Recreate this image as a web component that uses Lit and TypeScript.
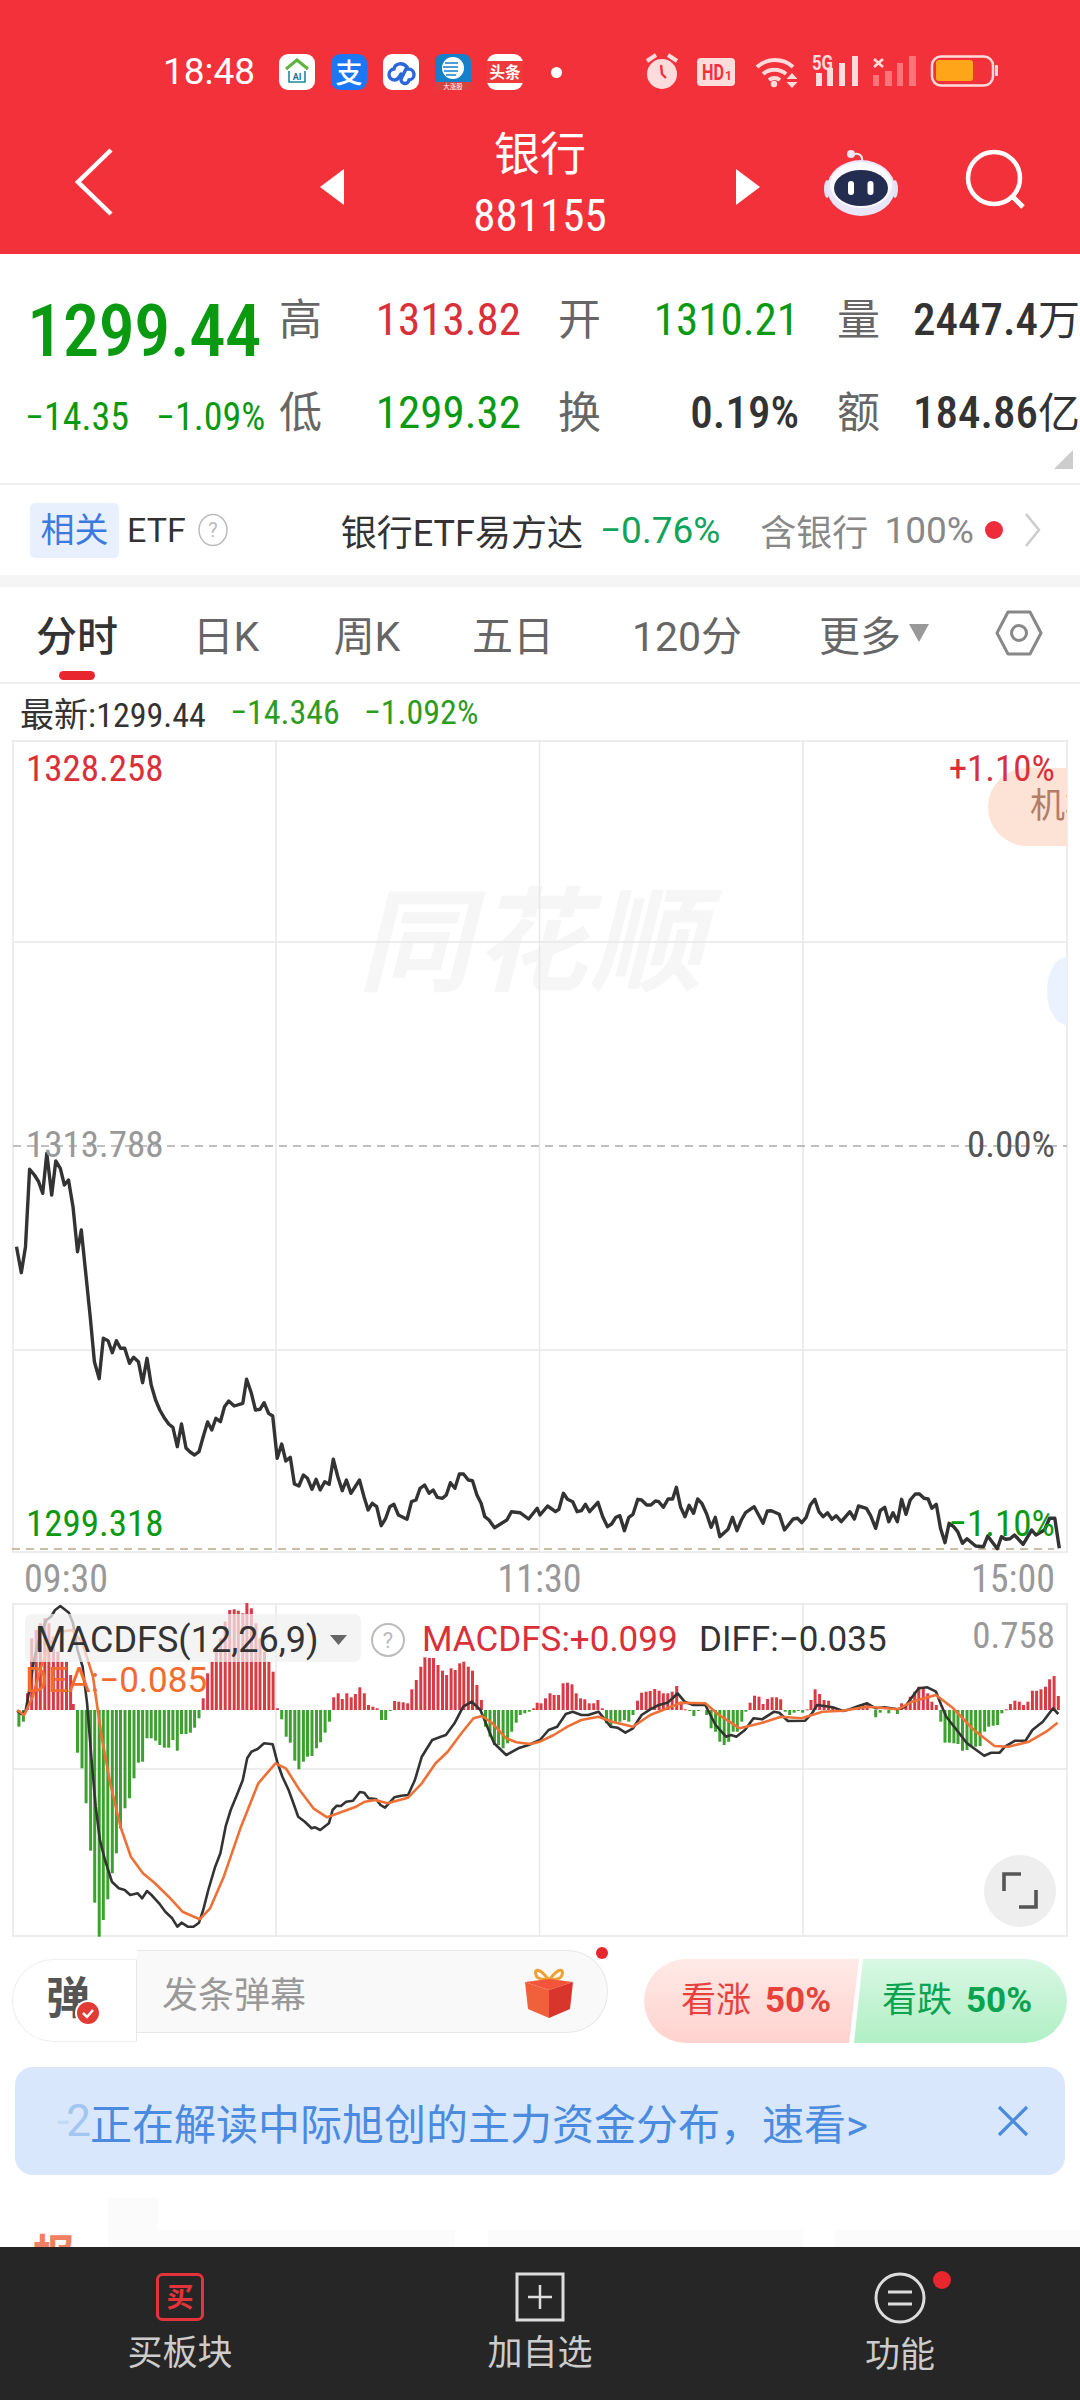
import { LitElement, html, css, svg } from "lit";
import { customElement } from "lit/decorators.js";

type P = [number, number];
const mainA: P[] = [[48,440],[62,518],[74,440],[86,208],[100,225],[112,245],[124,280],[136,160],[150,285],[162,183],[175,205],[187,255],[199,240],[212,320],[225,455],[236,390],[250,530],[262,650],[274,785],[288,836],[300,715],[314,722],[326,758],[338,722],[350,745],[362,745],[376,790],[388,772],[402,785],[414,848],[427,775],[439,855],[452,900],[464,930],[478,955],[490,972],[502,982],[515,1040],[527,972],[540,1044],[552,1056],[565,1065],[578,1055],[590,1010],[603,966],[615,990],[627,955],[640,965],[652,920],[664,903],[680,918],[705,910],[716,838],[730,880],[742,930],[755,928],[767,908],[780,940],[792,948],[805,1075],[818,1032],[830,1083],[843,1072],[855,1152],[868,1158],[881,1125],[893,1135],[906,1168],[918,1138],[930,1170],[943,1145],[956,1153],[968,1078],[981,1130],[994,1172],[1006,1140],[1019,1180],[1044,1140],[1057,1190],[1069,1230],[1081,1210],[1094,1220],[1107,1277],[1120,1255],[1132,1220],[1144,1213],[1157,1245],[1182,1258],[1195,1205],[1208,1200],[1220,1165],[1233,1155],[1246,1180],[1258,1170],[1270,1192],[1285,1195],[1296,1185],[1308,1148],[1321,1165],[1334,1122],[1346,1122],[1360,1140],[1372,1142],[1385,1185],[1397,1210],[1408,1250],[1420,1260],[1436,1283],[1472,1260],[1485,1235],[1510,1238],[1535,1257],[1560,1225]];
const mainB: P[] = [[0,1245],[22,1218],[45,1235],[55,1228],[68,1180],[80,1198],[95,1205],[108,1235],[120,1232],[132,1213],[144,1235],[168,1207],[182,1250],[196,1280],[208,1272],[220,1252],[232,1247],[245,1292],[258,1252],[270,1243],[284,1198],[295,1200],[310,1215],[322,1215],[335,1203],[345,1205],[358,1222],[372,1197],[385,1197],[396,1162],[408,1220],[421,1250],[433,1216],[446,1240],[458,1197],[470,1210],[484,1242],[497,1282],[509,1252],[522,1310],[546,1288],[559,1252],[572,1292],[585,1260],[597,1238],[622,1220],[648,1270],[660,1233],[672,1232],[695,1243],[710,1290],[735,1257],[748,1255],[760,1268],[773,1252],[785,1215],[798,1198],[810,1235],[822,1250],[835,1238],[848,1258],[860,1247],[875,1265],[900,1235],[913,1257],[925,1218],[948,1225],[960,1247],[975,1285],[988,1232],[1001,1222],[1013,1265],[1025,1238],[1038,1265],[1050,1198],[1063,1243],[1075,1200],[1090,1182],[1102,1182],[1115,1195],[1127,1197],[1138,1225],[1151,1213],[1163,1285],[1176,1328],[1188,1270],[1201,1280],[1213,1295],[1227,1330],[1240,1316],[1265,1338],[1288,1340],[1300,1308],[1328,1346],[1340,1310],[1352,1318],[1365,1316],[1378,1305],[1403,1333],[1428,1290],[1440,1305],[1465,1290],[1480,1255],[1495,1255],[1508,1345]];
const diffA: P[] = [[50,392],[62,402],[74,395],[85,330],[97,250],[110,190],[122,150],[135,120],[148,110],[160,90],[175,78],[200,98],[212,130],[225,210],[240,260],[253,370],[265,530],[278,680],[290,780],[305,840],[325,905],[345,925],[362,930],[378,945],[400,940],[413,955],[427,933],[440,945],[462,970],[480,995],[500,1015],[515,1040],[527,1028],[545,1040],[562,1040],[578,1028],[590,990],[605,930],[625,860],[640,820],[655,740],[670,690],[690,640],[705,600],[718,535],[730,515],[748,507],[767,490],[792,493],[805,545],[820,590],[838,630],[852,670],[866,710],[885,725],[905,745],[915,742],[930,750],[955,730],[966,690],[978,677],[990,678],[1005,665],[1025,662],[1045,636],[1058,638],[1070,655],[1092,657],[1105,675],[1118,683],[1145,652],[1165,647],[1185,645],[1205,600],[1225,530],[1255,480],[1280,470],[1295,465],[1320,430],[1345,380],[1370,365],[1395,390],[1415,440],[1435,490],[1470,525],[1505,505],[1535,495],[1568,480]];
const diffB: P[] = [[0,480],[25,450],[50,440],[75,402],[95,395],[120,405],[140,405],[170,395],[190,420],[205,440],[225,443],[248,458],[270,445],[295,405],[320,388],[345,375],[370,368],[385,355],[400,340],[420,365],[445,375],[480,375],[510,435],[540,470],[555,465],[570,470],[595,450],[620,415],[645,418],[680,395],[695,398],[720,423],[770,422],[790,400],[805,375],[850,382],[880,393],[900,388],[925,378],[950,370],[975,385],[1000,382],[1020,385],[1040,388],[1060,380],[1085,345],[1100,325],[1125,322],[1150,335],[1165,375],[1180,410],[1210,450],[1240,490],[1290,527],[1310,518],[1335,518],[1350,500],[1380,482],[1410,482],[1430,450],[1460,425],[1490,385],[1505,402]];
const deaA: P[] = [[50,390],[70,405],[95,350],[120,260],[145,190],[175,155],[210,150],[240,190],[270,290],[295,470],[320,610],[350,740],[380,830],[415,880],[450,910],[490,950],[530,995],[580,1018],[610,985],[650,890],[700,740],[750,610],[800,550],[830,565],[870,630],[910,685],[950,712],[990,697],[1030,682],[1060,665],[1090,660],[1125,670],[1185,653],[1225,610],[1265,550],[1300,515],[1340,460],[1375,415],[1400,408],[1430,430],[1470,475],[1500,487],[1540,492],[1568,485]];
const deaB: P[] = [[0,485],[40,465],[80,440],[120,420],[170,410],[210,425],[270,440],[320,405],[370,385],[410,368],[480,370],[520,405],[580,445],[640,430],[700,410],[760,415],[820,395],[880,392],[950,380],[1040,388],[1080,365],[1150,345],[1200,385],[1260,450],[1320,498],[1360,500],[1420,485],[1470,455],[1503,428]];
const barsA: P[] = [[55,440],[68,425],[80,340],[92,175],[105,150],[117,130],[130,115],[142,130],[155,170],[168,215],[180,245],[193,245],[205,285],[213,372],[225,518],[238,565],[250,670],[263,812],[275,968],[288,1070],[300,1020],[313,958],[326,880],[338,820],[350,745],[363,685],[376,655],[389,595],[402,548],[414,545],[427,475],[439,475],[452,482],[464,495],[477,503],[490,503],[502,480],[515,512],[527,462],[540,462],[553,458],[565,443],[578,415],[590,355],[603,280],[616,245],[628,205],[641,175],[654,125],[667,90],[680,88],[692,92],[705,100],[717,66],[730,85],[743,130],[755,175],[768,215],[781,245],[793,275],[806,385],[818,418],[831,470],[843,488],[856,542],[868,568],[881,545],[893,530],[906,528],[919,505],[931,487],[944,458],[957,425],[969,352],[982,340],[994,357],[1007,340],[1020,352],[1032,342],[1045,322],[1058,340],[1070,375],[1083,380],[1095,385],[1108,420],[1120,420],[1133,392],[1146,363],[1158,365],[1171,367],[1184,370],[1196,328],[1209,300],[1222,260],[1234,232],[1247,234],[1259,234],[1272,255],[1285,272],[1297,285],[1310,265],[1322,270],[1335,250],[1347,245],[1360,260],[1372,272],[1385,315],[1398,360],[1410,440],[1423,470],[1436,495],[1448,495],[1461,505],[1474,490],[1486,455],[1499,428],[1511,405],[1524,400],[1537,395],[1550,385],[1560,368]];
const barsB: P[] = [[3,370],[16,355],[29,340],[41,345],[54,345],[67,310],[80,308],[93,313],[105,340],[118,355],[130,358],[143,370],[156,370],[168,360],[181,385],[193,430],[206,440],[219,430],[232,425],[245,420],[258,425],[270,405],[283,362],[295,338],[308,335],[320,333],[333,327],[346,332],[358,340],[371,340],[384,335],[397,318],[410,365],[422,388],[435,392],[447,408],[460,393],[484,405],[497,445],[510,455],[522,485],[535,495],[548,485],[561,455],[573,455],[586,425],[598,395],[610,368],[623,347],[636,350],[648,372],[661,357],[674,352],[687,352],[699,358],[712,395],[725,405],[738,398],[750,392],[763,398],[776,388],[787,360],[799,328],[812,342],[825,360],[838,362],[850,382],[925,375],[938,372],[950,368],[975,412],[988,398],[1013,400],[1038,402],[1050,370],[1063,375],[1075,350],[1088,335],[1100,320],[1113,325],[1126,340],[1138,365],[1151,375],[1164,425],[1176,488],[1189,488],[1202,490],[1214,492],[1227,512],[1240,510],[1252,500],[1265,500],[1278,498],[1291,455],[1303,440],[1316,437],[1329,435],[1341,400],[1354,388],[1366,372],[1379,362],[1392,365],[1404,375],[1417,365],[1430,332],[1442,332],[1455,328],[1468,320],[1480,298],[1493,288],[1505,348]];

const S = 2.904;
const pts = (a: P[], b: P[], top: number) =>
  [...a.map(([x, y]) => `${(x / S).toFixed(1)},${(top + y / 3).toFixed(1)}`),
   ...b.map(([x, y]) => `${(540 + x / S).toFixed(1)},${(top + y / 3).toFixed(1)}`)].join(" ");
const bars = [...barsA.map(([x, y]) => [x / S, y] as P), ...barsB.map(([x, y]) => [540 + x / S, y] as P)];

@customElement("app-root")
export class AppRoot extends LitElement {
  static styles = css`
    :host { display: block; width: 1080px; height: 2400px; overflow: hidden; background: #fff; position: relative;
      font-family: Roboto, "Noto Sans CJK SC", sans-serif; color: #333; }
    .n { font-stretch: 87%; }
    .header { height: 254px; background: #f3313a; color: #fff; display: flex; flex-direction: column; }
    .status { height: 110px; display: flex; align-items: center; padding: 34px 0 0 163px; box-sizing: border-box; }
    .time { width: 116px; font-size: 37px; line-height: 40px; }
    .apps { display: flex; gap: 16px; }
    .apps svg { width: 36px; height: 36px; display: block; }
    .sdot { width: 11px; height: 11px; border-radius: 50%; background: #fff; margin-left: 28px; }
    .sys { margin: 6px 0 0 68px; display: block; width: 380px; height: 60px; }
    .nav { flex: 1; display: grid; grid-template-columns: 320px 25px 390px 25px 320px; align-items: center; }
    .nav svg { display: block; }
    .back { margin-left: 75px; }
    .tri { margin-top: 10px; }
    .title { text-align: center; padding-top: 2px; }
    .title .t { font-size: 46px; line-height: 58px; }
    .title .c { font-size: 45px; line-height: 50px; margin-top: 8px; }
    .navr { display: flex; align-items: center; padding-left: 63px; gap: 66px; }

    .quote { height: 231px; box-sizing: border-box; padding-top: 34px; border-bottom: 2px solid #eee; position: relative;
      display: grid; grid-template-columns: 279px 43px 199px 80px 198px 81px 200px; grid-template-rows: 60px 60px; row-gap: 33px; }
    .lab { font-size: 43px; line-height: 60px; color: #666; justify-self: end; width: 43px; padding-top: 2px; }
    .val { font-size: 45px; line-height: 60px; text-align: right; white-space: nowrap; padding-top: 2px; }
    .val.d { font-weight: 500; color: #333; }
    .cj { font-size: 42px; font-weight: 400; }
    .red { color: #d9303a; } .grn { color: #0a9a12; }
    .big { font-size: 73px; line-height: 60px; font-weight: 500; color: #0a9a12; padding-left: 27px; margin-top: 13px; white-space: nowrap; letter-spacing: -0.8px; }
    .chg { font-size: 38px; line-height: 60px; color: #0a9a12; padding-left: 25px; margin-top: 6px; white-space: nowrap; display: flex; gap: 27px; }
    .corner { position: absolute; right: 7px; bottom: 14px; width: 19px; height: 19px; background: #ccc; clip-path: polygon(100% 0, 100% 100%, 0 100%); }

    .etf { height: 90px; display: flex; align-items: center; font-size: 36px; padding-left: 30px; white-space: nowrap; }
    .pill { width: 89px; height: 55px; background: #e8f0fd; color: #3b7be0; border-radius: 5px; text-align: center; line-height: 55px; margin-right: 8px; font-size: 34px; }
    .elab { font-size: 34px; }
    .help { margin-left: 12px; }
    .etfn { margin-left: 113px; color: #333; }
    .etfp { margin-left: 17px; color: #10a35a; font-size: 37px; }
    .etfh { margin-left: 40px; color: #888; }
    .etfv { margin-left: 16px; color: #888; font-size: 37px; }
    .rdot { width: 18px; height: 18px; border-radius: 50%; background: #ee2c3c; margin-left: 11px; }
    .chev { margin-left: 21px; }
    .band { height: 12px; background: #f5f5f5; }
    .tabs { height: 97px; box-sizing: border-box; border-bottom: 2px solid #eee; display: grid; grid-template-columns: 154px 144px 138px 154px 194px 180px 110px; align-items: center; justify-items: center; font-size: 41px; color: #666; padding-bottom: 3px; position: relative; }
    .tabs .on { color: #333; font-weight: 500; position: relative; }
    .tabs .on::after { content: ""; position: absolute; left: 23px; bottom: -17px; width: 36px; height: 9px; border-radius: 5px; background: #e8262e; }
    .more { display: flex; align-items: center; gap: 8px; }
    .latest { height: 56px; display: flex; align-items: center; padding-left: 20px; font-size: 34px; white-space: nowrap; }
    .latest .g { color: #2d9c1e; margin-left: 24px; }

    .chart { position: relative; height: 813px; }
    .macd { position: relative; height: 334px; }
    .chart svg, .macd svg { position: absolute; left: 0; top: 0; width: 1080px; height: 100%; display: block; }
    .lb { position: absolute; font-size: 37px; line-height: 36px; white-space: nowrap; }
    .lm { font-size: 35px; }
    .lh { font-size: 36px; }
    .wm { position: absolute; left: 358px; top: 146px; font-size: 113px; line-height: 116px; font-weight: 700; font-style: italic; color: #f6f6f6; letter-spacing: 3px; }
    .pj { position: absolute; right: 13px; top: 28px; width: 79px; height: 78px; border-radius: 39px 0 0 39px; background: #fde3d5; color: #b47d68; font-size: 35px; line-height: 78px; overflow: hidden; padding-left: 42px; box-sizing: border-box; white-space: nowrap; }
    .pc { position: absolute; right: 13px; top: 217px; width: 20px; height: 68px; border-radius: 20px 0 0 20px / 34px 0 0 34px; background: #eaf2fd; }
    .axis { height: 50px; display: flex; justify-content: space-between; align-items: center; padding: 2px 25px 0 24px; box-sizing: border-box; font-size: 38px; color: #999; }
    .mp { position: absolute; left: 25px; top: 11px; width: 336px; height: 48px; border-radius: 7px; background: rgba(240,240,240,.72); }
    .mt { position: absolute; left: 330px; top: 32px; width: 17px; height: 10px; background: #666; clip-path: polygon(0 0, 100% 0, 50% 100%); }
    .fs { position: absolute; left: 984px; top: 252px; width: 72px; height: 72px; border-radius: 50%; background: #eee; }

    .act { height: 106px; display: flex; padding: 13px 12px 0; box-sizing: border-box; }
    .dm { width: 125px; height: 83px; margin-top: 9px; box-sizing: border-box; border: 1.5px solid #eee; border-right: 1.5px solid #e8e8e8; border-radius: 42px 0 0 42px; position: relative; font-size: 44px; font-weight: 700; color: #555; line-height: 78px; padding-left: 33px; }
    .chk { position: absolute; left: 62px; top: 40px; }
    .ip { width: 471px; height: 83px; box-sizing: border-box; background: #f9f9f9; border: 1.5px solid #e8e8e8; border-left: 0; border-radius: 0 41px 41px 0; display: flex; align-items: center; padding-left: 25px; font-size: 36px; color: #999; position: relative; }
    .gift { position: absolute; left: 387px; top: 14px; }
    .tip { position: absolute; left: 459px; top: -4px; width: 12px; height: 12px; border-radius: 50%; background: #e8262e; }
    .vote { margin-left: 36px; margin-top: 9px; display: flex; width: 423px; height: 84px; border-radius: 42px; overflow: hidden; font-size: 35px; white-space: nowrap; }
    .up { width: 215px; background: linear-gradient(#ffeae7, #ffd2ce); color: #e8413c; padding-left: 37px; box-sizing: border-box; clip-path: polygon(0 0, 100% 0, 205px 100%, 0 100%); line-height: 84px; }
    .dn { width: 213px; margin-left: -5px; background: linear-gradient(#d9f8e4, #b0efc4); color: #0aa34f; padding-left: 28px; box-sizing: border-box; clip-path: polygon(9px 0, 100% 0, 100% 100%, 0 100%); line-height: 84px; }
    .vote b { font-size: 35px; margin-left: 14px; font-weight: 700; }
    .ban { margin: 24px 15px 0; height: 108px; background: #d8e7fb; border-radius: 18px; display: flex; align-items: center; padding-left: 42px; color: #4a8be0; font-size: 42px; white-space: nowrap; position: relative; }
    .ban .s { color: #a3c5f2; font-size: 44px; letter-spacing: -3px; margin-right: 2px; }
    .ban .s i { color: #c4d9f5; font-style: normal; }
    .ban svg { position: absolute; left: 982px; top: 38px; }
    .rest { height: 72px; position: relative; overflow: hidden; }
    .rest .h { position: absolute; left: 33px; top: 60px; font-size: 42px; line-height: 42px; font-weight: 700; color: #f0805f; }
    .sk { position: absolute; background: #fbfbfb; }
    .bar { height: 153px; background: #262626; display: grid; grid-template-columns: repeat(3, 360px); color: #ccc; font-size: 35px; position: relative; }
    .bar div { display: flex; flex-direction: column; align-items: center; padding-top: 25px; box-sizing: border-box; }
    .bar span { margin-top: 12px; line-height: 40px; }
    .bar svg { display: block; }
    .bdot { position: absolute; left: 933px; top: 24px; width: 18px; height: 18px; border-radius: 50%; background: #e8262e; padding: 0 !important; }
  `;

  private apps() {
    return html`<div class="apps">
      <svg viewBox="0 0 36 36"><rect width="36" height="36" rx="9" fill="#fff"/><path d="M7 15 18 6l11 9" fill="none" stroke="#5cb33e" stroke-width="3"/><path d="M10 17v11h16V17" fill="none" stroke="#1f8a9a" stroke-width="1.6"/><text x="18" y="26" font-size="9" font-weight="700" fill="#1f6f9a" text-anchor="middle" font-family="Roboto">AI</text></svg>
      <svg viewBox="0 0 36 36"><rect width="36" height="36" rx="9" fill="#1a78f5"/><text x="18" y="29" font-size="27" fill="#fff" font-weight="500" text-anchor="middle" font-family="Noto Sans CJK SC">支</text></svg>
      <svg viewBox="0 0 36 36"><rect width="36" height="36" rx="9" fill="#fff"/><path d="M12 26a5.5 5.5 0 0 1-1-11c1-6 9-7 13-2l-6 12a4 4 0 0 0 8 1 5.5 5.5 0 0 0-1-11M12 26c3 0 4-3 6-6" fill="none" stroke="#2a66dc" stroke-width="3.4" stroke-linecap="round"/></svg>
      <svg viewBox="0 0 36 36"><rect width="36" height="36" rx="8" fill="#1480c8"/><circle cx="18" cy="14" r="11" fill="#fff"/><path d="M10 9h13M8 13h15M9 17h14M11 21h10" stroke="#1480c8" stroke-width="1.6"/><rect y="28" width="36" height="8" fill="#d9403f"/><text x="18" y="34.5" font-size="6.5" fill="#fff" text-anchor="middle" font-family="Noto Sans CJK SC">大涨股</text></svg>
      <svg viewBox="0 0 36 36"><rect width="36" height="36" rx="9" fill="#fff"/><rect y="7" width="36" height="22" fill="#ee3a3a"/><text x="18" y="24" font-size="15.5" font-weight="700" fill="#fff" text-anchor="middle" font-family="Noto Sans CJK SC">头条</text></svg>
    </div>`;
  }

  private sys() {
    const c = "#ffdcdc";
    return html`<svg class="sys" viewBox="0 0 380 60">
      <circle cx="32" cy="29" r="15" fill="${c}"/><path d="M17 16 26 10M38 10l9 6" stroke="${c}" stroke-width="4"/><path d="M31 20l1 9 4 4" fill="none" stroke="#f3313a" stroke-width="2.4"/>
      <rect x="67" y="13" width="38" height="28" rx="4" fill="${c}"/><text x="72" y="35" font-size="22" font-weight="700" fill="#f3313a" font-family="Roboto" textLength="22" lengthAdjust="spacingAndGlyphs">HD</text><text x="95" y="35" font-size="12" font-weight="700" fill="#f3313a" font-family="Roboto">1</text>
      <g fill="none" stroke="${c}" stroke-width="4"><path d="M127 22a27 27 0 0 1 36 0"/><path d="M133 29a18 18 0 0 1 23 0"/><path d="M139 35a9 9 0 0 1 11 0"/></g><circle cx="144" cy="39" r="3.2" fill="${c}"/><path d="M162 28l5.500 6h-11zM156.500 37h11L162 43z" fill="${c}"/>
      <text x="182" y="25" font-size="20" font-weight="700" fill="${c}" font-family="Roboto" textLength="21" lengthAdjust="spacingAndGlyphs">5G</text>
      <path d="M186 28h6v13h-6zM197 23h6v18h-6zM209 18h6v23h-6zM222 11h6v30h-6z" fill="${c}"/>
      <path d="M244 14l9 8M253 14l-9 8" stroke="${c}" stroke-width="2.6"/>
      <path d="M243 30h6v11h-6zM255 26h7v15h-7zM267 18h6v23h-6zM279 11h7v30h-7z" fill="#ff8a8f" opacity=".75"/>
      <rect x="302" y="11.500" width="61" height="29" rx="9" fill="none" stroke="${c}" stroke-width="2.500"/><rect x="306" y="15" width="37" height="21" rx="3" fill="#ffa51a"/><rect x="365" y="20" width="3" height="11" rx="1" fill="${c}"/>
    </svg>`;
  }

  render() {
    return html`
      <div class="header">
        <div class="status"><span class="time">18:48</span>${this.apps()}<span class="sdot"></span>${this.sys()}</div>
        <div class="nav">
          <svg class="back" width="40" height="72" viewBox="0 0 40 72"><path d="M36 4 3 36l33 32" fill="none" stroke="#fff" stroke-width="4.500"/></svg>
          <svg class="tri" width="25" height="36" viewBox="0 0 25 36"><path d="M24 0v36L0 18z" fill="#fff"/></svg>
          <div class="title"><div class="t">银行</div><div class="c n">881155</div></div>
          <svg class="tri" width="25" height="36" viewBox="0 0 25 36"><path d="M1 0v36l24-18z" fill="#fff"/></svg>
          <div class="navr">
            <svg width="76" height="72" viewBox="23 12 76 72"><path d="M62 27c1-5-3-8-7-7" fill="none" stroke="#eee" stroke-width="2"/><circle cx="51" cy="20" r="4" fill="#f0e8f4"/><ellipse cx="27" cy="55" rx="3" ry="9" fill="#e4e0f4"/><ellipse cx="95" cy="55" rx="3" ry="9" fill="#e4e0f4"/><ellipse cx="61" cy="54" rx="34" ry="28" fill="#e9e6fa"/><ellipse cx="61" cy="51" rx="31" ry="23" fill="#fbfaff"/><ellipse cx="61" cy="54" rx="27" ry="18" fill="#232d4f"/><rect x="48" y="47" width="6" height="14" rx="3" fill="#fff"/><rect x="67.500" y="47" width="6" height="14" rx="3" fill="#fff"/></svg>
            <svg width="64" height="66" viewBox="0 0 64 66"><circle cx="29" cy="29" r="26" fill="none" stroke="#fff" stroke-width="4.500"/><path d="M47 47l11 11" stroke="#fff" stroke-width="5"/></svg>
          </div>
        </div>
      </div>

      <div class="quote">
        <div class="big n">1299.44</div>
        <div class="lab">高</div><div class="val n red">1313.82</div>
        <div class="lab">开</div><div class="val n grn">1310.21</div>
        <div class="lab">量</div><div class="val n d">2447.4<span class="cj">万</span></div>
        <div class="chg n"><span>−14.35</span><span>−1.09%</span></div>
        <div class="lab">低</div><div class="val n grn">1299.32</div>
        <div class="lab">换</div><div class="val n d">0.19%</div>
        <div class="lab">额</div><div class="val n d">184.86<span class="cj">亿</span></div>
        <div class="corner"></div>
      </div>

      <div class="etf">
        <div class="pill">相关</div><span class="elab">ETF</span>
        <svg class="help" width="30" height="34" viewBox="0 0 30 34"><ellipse cx="15" cy="17" rx="14" ry="15.500" fill="none" stroke="#bbb" stroke-width="1.500"/><text x="15" y="24" font-size="20" fill="#bbb" text-anchor="middle" font-family="Roboto">?</text></svg>
        <span class="etfn">银行ETF易方达</span><span class="etfp">−0.76%</span><span class="etfh">含银行</span><span class="etfv">100%</span><span class="rdot"></span>
        <svg class="chev" width="18" height="34" viewBox="0 0 18 34"><path d="M2 1l13 16L2 33" fill="none" stroke="#ccc" stroke-width="2.500"/></svg>
      </div>
      <div class="band"></div>
      <div class="tabs">
        <span class="on">分时</span><span>日K</span><span>周K</span><span>五日</span><span>120分</span>
        <span class="more">更多<svg width="20" height="18" viewBox="0 0 20 18"><path d="M0 0h20L10 18z" fill="#999"/></svg></span>
        <svg width="48" height="48" viewBox="0 0 48 48"><path d="M13 3h22l11 21-11 21H13L2 24z" fill="none" stroke="#888" stroke-width="3" stroke-linejoin="round"/><circle cx="24" cy="24" r="7.500" fill="none" stroke="#888" stroke-width="3"/></svg>
      </div>
      <div class="latest"><span>最新:<span class="n">1299.44</span></span><span class="g n">−14.346</span><span class="g n">−1.092%</span></div>

      <div class="chart">
        <div class="wm">同花顺</div>
        <svg viewBox="0 740 1080 813">
          <g stroke="#e8e8e8" stroke-width="1.500" fill="none">
            <path d="M12.500 741H1068M13 942h1054M13 1350h1054M13 1552h1054"/>
            <path d="M13 740v813M276 740v813M539.500 740v813M803 740v813M1067 740v813"/>
          </g>
          <path d="M13 1146h1054" stroke="#aaa" stroke-width="1.600" stroke-dasharray="8 6"/>
          <path d="M12 1549h1042" stroke="#bba98a" stroke-width="1.600" stroke-dasharray="8 6"/>
          <polyline points="${pts(mainA, mainB, 1100)}" fill="none" stroke="#333" stroke-width="3.400" stroke-linejoin="round"/>
        </svg>
        <div class="pj">机构</div><div class="pc"></div>
        <span class="lb n red" style="left:26px;top:11px">1328.258</span>
        <span class="lb n red" style="right:25px;top:11px">+1.10%</span>
        <span class="lb n" style="left:26px;top:387px;color:#999">1313.788</span>
        <span class="lb n" style="right:25px;top:387px;color:#555">0.00%</span>
        <span class="lb n grn" style="left:26px;top:766px">1299.318</span>
        <span class="lb n grn" style="right:25px;top:766px">−1.10%</span>
      </div>
      <div class="axis n"><span>09:30</span><span>11:30</span><span>15:00</span></div>
      <div class="macd">
        <svg viewBox="0 1603 1080 334">
          <g stroke="#e8e8e8" stroke-width="1.500" fill="none"><path d="M12.500 1604H1068M13 1769h1054M13 1936h1054M13 1603v334M276 1603v334M539.500 1603v334M803 1603v334M1067 1603v334"/></g>
          ${bars.map(([x, y]) => {
            const top = 1580 + Math.min(y, 390) / 3;
            const h = Math.abs(y - 390) / 3;
            return svg`<rect x="${(x - 1.5).toFixed(1)}" y="${top.toFixed(1)}" width="3" height="${Math.max(h, 1).toFixed(1)}" fill="${y > 390 ? "#3da12f" : "#d93b44"}"/>`;
          })}
          <polyline points="${pts(diffA, diffB, 1580)}" fill="none" stroke="#333" stroke-width="2.600" stroke-linejoin="round"/>
          <polyline points="${pts(deaA, deaB, 1580)}" fill="none" stroke="#ee7036" stroke-width="2.600" stroke-linejoin="round"/>
        </svg>
        <div class="mp"></div><div class="mt"></div>
        <span class="lb lh" style="left:35px;top:19px">MACDFS(12,26,9)</span>
        <svg width="36" height="36" viewBox="0 0 36 36" style="left:370px;top:19px;width:36px;height:36px"><circle cx="18" cy="18" r="16" fill="none" stroke="#bbb" stroke-width="2"/><text x="18" y="26" font-size="22" fill="#bbb" text-anchor="middle" font-family="Roboto">?</text></svg>
        <span class="lb lm red" style="left:422px;top:19px">MACDFS:+0.099</span>
        <span class="lb lm" style="left:699px;top:19px">DIFF:−0.035</span>
        <span class="lb n" style="right:25px;top:15px;color:#999">0.758</span>
        <span class="lb lm" style="left:25px;top:60px;color:#f36b2e">DEA:−0.085</span>
        <div class="fs"><svg viewBox="0 0 72 72" style="width:72px;height:72px"><path d="M20 36V19h17M52 35v17H35" fill="none" stroke="#555" stroke-width="3.600"/></svg></div>
      </div>

      <div class="act">
        <div class="dm">弹<svg class="chk" width="26" height="26" viewBox="0 0 26 26"><circle cx="13" cy="13" r="12" fill="#e23b36" stroke="#fff" stroke-width="2"/><path d="M8 13l4 4 6-7" fill="none" stroke="#fff" stroke-width="2.500"/></svg></div>
        <div class="ip">发条弹幕
          <svg class="gift" width="50" height="54" viewBox="0 0 50 54"><path d="M24 14C15 2 10 4 12 10c1 4 7 5 12 4zm2 0C35 2 40 4 38 10c-1 4-7 5-12 4z" fill="none" stroke="#f0a030" stroke-width="3"/><path d="M1 17l24-3 24 3-24 8z" fill="#f4553a"/><path d="M1 17l24 8v28L4 44z" fill="#f0603a"/><path d="M49 17 25 25v28l21-9z" fill="#d8352c"/></svg>
          <span class="tip"></span>
        </div>
        <div class="vote"><div class="up">看涨<b>50%</b></div><div class="dn">看跌<b>50%</b></div></div>
      </div>
      <div class="ban"><span class="s"><i>-</i>2</span>正在解读中际旭创的主力资金分布，速看&gt;
        <svg width="32" height="32" viewBox="0 0 32 32"><path d="M2 2l28 28M30 2 2 30" stroke="#4a8be0" stroke-width="3.200"/></svg>
      </div>
      <div class="rest">
        <div class="sk" style="left:108px;top:23px;width:50px;height:49px"></div>
        <div class="sk" style="left:140px;top:55px;width:315px;height:17px"></div>
        <div class="sk" style="left:488px;top:55px;width:315px;height:17px"></div>
        <div class="sk" style="left:835px;top:55px;width:245px;height:17px"></div>
        <div class="h">报</div>
      </div>
      <div class="bar">
        <div><svg width="50" height="50" viewBox="0 0 50 50"><rect x="2.500" y="2.500" width="45" height="45" rx="5" fill="none" stroke="#e5333b" stroke-width="3"/><text x="25" y="35" font-size="27" font-weight="700" fill="#e5333b" text-anchor="middle" font-family="Noto Sans CJK SC">买</text></svg><span>买板块</span></div>
        <div><svg width="50" height="50" viewBox="0 0 50 50"><rect x="2" y="2" width="46" height="46" fill="none" stroke="#ddd" stroke-width="3"/><path d="M25 13v24M13 25h24" stroke="#ddd" stroke-width="2.500"/></svg><span>加自选</span></div>
        <div><svg width="52" height="52" viewBox="0 0 52 52"><circle cx="26" cy="26" r="24" fill="none" stroke="#ddd" stroke-width="3"/><path d="M14 20h24M14 32h24" stroke="#ddd" stroke-width="3"/></svg><span>功能</span></div>
        <div class="bdot"></div>
      </div>
    `;
  }
}
